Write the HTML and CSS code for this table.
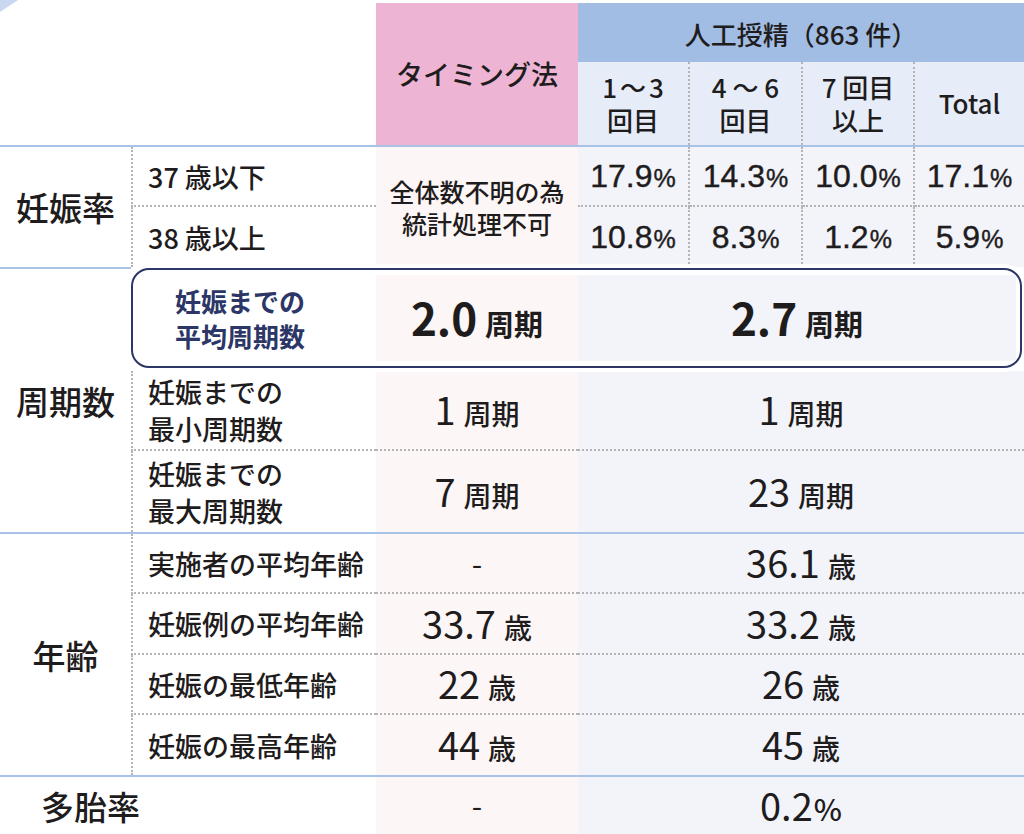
FILE: index.html
```html
<!DOCTYPE html>
<html lang="ja">
<head>
<meta charset="utf-8">
<title>治療成績</title>
<link rel="stylesheet" href="styles.css">
</head>
<body>
<div class="page">
  <div class="corner"></div>
  <div class="grid">
    <!-- header -->
    <div class="cell cab r12"></div>
    <div class="cell ct r12 h-timing">タイミング法</div>
    <div class="cell cai r1 h-ai">人工授精（863 件）</div>
    <div class="cell c4 r2 h-sub dr"><div><span class="wide">1～3</span><br>回目</div></div>
    <div class="cell c5 r2 h-sub dr"><div>4 ～ 6<br>回目</div></div>
    <div class="cell c6 r2 h-sub dr"><div>7 回目<br>以上</div></div>
    <div class="cell c7 r2 h-sub"><div>Total</div></div>

    <div class="hline call r3"></div>

    <!-- 妊娠率 -->
    <div class="cell ca r45 glabel">妊娠率</div>
    <div class="cell cb r4 sub dl db">37 歳以下</div>
    <div class="cell cb r5 sub dl">38 歳以上</div>
    <div class="cell ct r45 tbg note">全体数不明の為<br>統計処理不可</div>
    <div class="cell c4 r4 aibg pct db dr"><span class="val">17.9<span class="ps">%</span></span></div>
    <div class="cell c5 r4 aibg pct db dr"><span class="val">14.3<span class="ps">%</span></span></div>
    <div class="cell c6 r4 aibg pct db dr"><span class="val">10.0<span class="ps">%</span></span></div>
    <div class="cell c7 r4 aibg pct db"><span class="val">17.1<span class="ps">%</span></span></div>
    <div class="cell c4 r5 aibg pct dr"><span class="val">10.8<span class="ps">%</span></span></div>
    <div class="cell c5 r5 aibg pct dr"><span class="val">8.3<span class="ps">%</span></span></div>
    <div class="cell c6 r5 aibg pct dr"><span class="val">1.2<span class="ps">%</span></span></div>
    <div class="cell c7 r5 aibg pct"><span class="val">5.9<span class="ps">%</span></span></div>

    <!-- 周期数 -->
    <div class="cell ca r68 glabel gtop">周期数</div>
    <div class="cell cb r7 sub dl db two">妊娠までの<br>最小周期数</div>
    <div class="cell ct r7 tbg db"><span class="val"><span class="num">1</span><span class="unit">周期</span></span></div>
    <div class="cell cai r7 aibg db"><span class="val"><span class="num">1</span><span class="unit">周期</span></span></div>
    <div class="cell cb r8 sub dl two">妊娠までの<br>最大周期数</div>
    <div class="cell ct r8 tbg"><span class="val"><span class="num">7</span><span class="unit">周期</span></span></div>
    <div class="cell cai r8 aibg"><span class="val"><span class="num">23</span><span class="unit">周期</span></span></div>

    <div class="hline call r9"></div>

    <!-- 年齢 -->
    <div class="cell ca r1013 glabel">年齢</div>
    <div class="cell cb r10 sub dl db">実施者の平均年齢</div>
    <div class="cell ct r10 tbg db"><span class="val"><span class="num dash">-</span></span></div>
    <div class="cell cai r10 aibg db"><span class="val"><span class="num">36.1</span><span class="unit">歳</span></span></div>
    <div class="cell cb r11 sub dl db">妊娠例の平均年齢</div>
    <div class="cell ct r11 tbg db"><span class="val"><span class="num">33.7</span><span class="unit">歳</span></span></div>
    <div class="cell cai r11 aibg db"><span class="val"><span class="num">33.2</span><span class="unit">歳</span></span></div>
    <div class="cell cb r12r sub dl db">妊娠の最低年齢</div>
    <div class="cell ct r12r tbg db"><span class="val"><span class="num">22</span><span class="unit">歳</span></span></div>
    <div class="cell cai r12r aibg db"><span class="val"><span class="num">26</span><span class="unit">歳</span></span></div>
    <div class="cell cb r13 sub dl">妊娠の最高年齢</div>
    <div class="cell ct r13 tbg"><span class="val"><span class="num">44</span><span class="unit">歳</span></span></div>
    <div class="cell cai r13 aibg"><span class="val"><span class="num">45</span><span class="unit">歳</span></span></div>

    <div class="hline call r14"></div>

    <!-- 多胎率 -->
    <div class="cell cab r15 glabel multi">多胎率</div>
    <div class="cell ct r15 tbg"><span class="val"><span class="num dash">-</span></span></div>
    <div class="cell cai r15 aibg"><span class="val"><span class="num">0.2</span><span class="ps2">%</span></span></div>

    <!-- highlighted row -->
    <div class="hbox cbox r6">
      <div class="hb-label">妊娠までの<br>平均周期数</div>
      <div class="hb-t"><span class="val"><span class="bnum">2.0</span><span class="bunit">周期</span></span></div>
      <div class="hb-ai"><span class="val"><span class="bnum">2.7</span><span class="bunit">周期</span></span></div>
    </div>
  </div>
</div>
</body>
</html>
```

FILE: styles.css
```css
* {
  box-sizing: border-box;
}

html, body {
  margin: 0;
  padding: 0;
  background: #ffffff;
}

body {
  font-family: "Noto Sans CJK JP", "Noto Sans", sans-serif;
  font-weight: 500;
  color: #1f1c1d;
}

.page {
  position: relative;
  width: 1024px;
  height: 834px;
  padding-top: 3px;
  overflow: hidden;
}

.corner {
  position: absolute;
  left: 0;
  top: 0;
  width: 18px;
  height: 12px;
  background: #c9d7f0;
  clip-path: polygon(0 0, 100% 0, 0 100%);
}

.grid {
  display: grid;
  grid-template-columns: 131px 245px 202px 112px 113px 112px 109px;
  grid-template-rows: 59px 83px 2px 60px 60px 104px 80px 81px 2px 60px 61px 60px 60px 2px 57px;
}

/* placement */
.ca { grid-column: 1; }
.cb { grid-column: 2; }
.ct { grid-column: 3; }
.c4 { grid-column: 4; }
.c5 { grid-column: 5; }
.c6 { grid-column: 6; }
.c7 { grid-column: 7; }
.cai { grid-column: 4 / 8; }
.cab { grid-column: 1 / 3; }
.call { grid-column: 1 / -1; }
.cbox { grid-column: 2 / 8; }

.r1 { grid-row: 1; }
.r2 { grid-row: 2; }
.r12 { grid-row: 1 / 3; }
.r3 { grid-row: 3; }
.r4 { grid-row: 4; }
.r5 { grid-row: 5; }
.r45 { grid-row: 4 / 6; }
.r6 { grid-row: 6; }
.r68 { grid-row: 6 / 9; }
.r7 { grid-row: 7; }
.r8 { grid-row: 8; }
.r9 { grid-row: 9; }
.r10 { grid-row: 10; }
.r11 { grid-row: 11; }
.r12r { grid-row: 12; }
.r13 { grid-row: 13; }
.r1013 { grid-row: 10 / 14; }
.r14 { grid-row: 14; }
.r15 { grid-row: 15; }

.cell {
  display: flex;
  align-items: center;
  justify-content: center;
  text-align: center;
}

.val {
  white-space: nowrap;
  margin-bottom: 3px;
}

/* header */
.h-timing {
  background: #eeb4d4;
  font-size: 27px;
  padding-bottom: 2px;
}

.h-ai {
  background: #a2bde4;
  font-size: 26px;
  padding-top: 1px;
}

.h-sub {
  background: #e7edf8;
  font-size: 26px;
  line-height: 33px;
  padding-bottom: 2px;
  white-space: nowrap;
}

.wide {
  letter-spacing: 3px;
  margin-right: -3px;
  white-space: nowrap;
}

.hline {
  background: #a9c2e8;
}

/* borders */
.db { border-bottom: 2px dotted #b4b4b4; }
.dr { border-right: 2px dotted #b4b4b4; }
.dl { border-left: 2px dotted #b4b4b4; }

/* backgrounds */
.tbg { background: #fdf6f6; }
.aibg { background: #f2f4fa; }

/* labels */
.glabel {
  font-size: 33px;
}

.gtop {
  border-top: 2px solid #a9c2e8;
}

.multi {
  justify-content: flex-start;
  padding-left: 41px;
}

.sub {
  justify-content: flex-start;
  text-align: left;
  padding-left: 15px;
  font-size: 27px;
}

.sub.two {
  line-height: 37px;
}

.note {
  font-size: 25px;
  line-height: 32px;
}

.pct {
  font-family: "Liberation Sans", Arial, sans-serif;
  font-size: 32px;
  -webkit-text-stroke: 0.4px #1f1c1d;
}

.pct .val {
  margin-bottom: 0;
}

.ps {
  font-size: 25px;
  margin-left: 1px;
}

.num {
  font-size: 38px;
  font-weight: 400;
}

.dash {
  font-size: 30px;
}

.unit {
  font-size: 28px;
  margin-left: 8px;
}

.ps2 {
  font-size: 30px;
  margin-left: 1px;
}

/* highlighted row */
.hbox {
  position: relative;
  z-index: 1;
  margin: 1px 2px 3px 0;
  border: 2px solid #2c3667;
  border-radius: 18px;
  padding: 5px 4px 5px 0;
  background: #ffffff;
  box-shadow: 0 0 0 4px #ffffff;
  display: grid;
  grid-template-columns: 243px 202px 1fr;
}

.hb-label {
  display: flex;
  align-items: center;
  padding-left: 42px;
  color: #2c3667;
  font-weight: 700;
  font-size: 26px;
  line-height: 35px;
}

.hb-t,
.hb-ai {
  display: flex;
  align-items: center;
  justify-content: center;
}

.hb-t { background: #fdf6f6; }
.hb-ai { background: #f2f4fa; }

.bnum {
  font-size: 44px;
  font-weight: 700;
}

.bunit {
  font-size: 29px;
  font-weight: 700;
  margin-left: 8px;
}
```
